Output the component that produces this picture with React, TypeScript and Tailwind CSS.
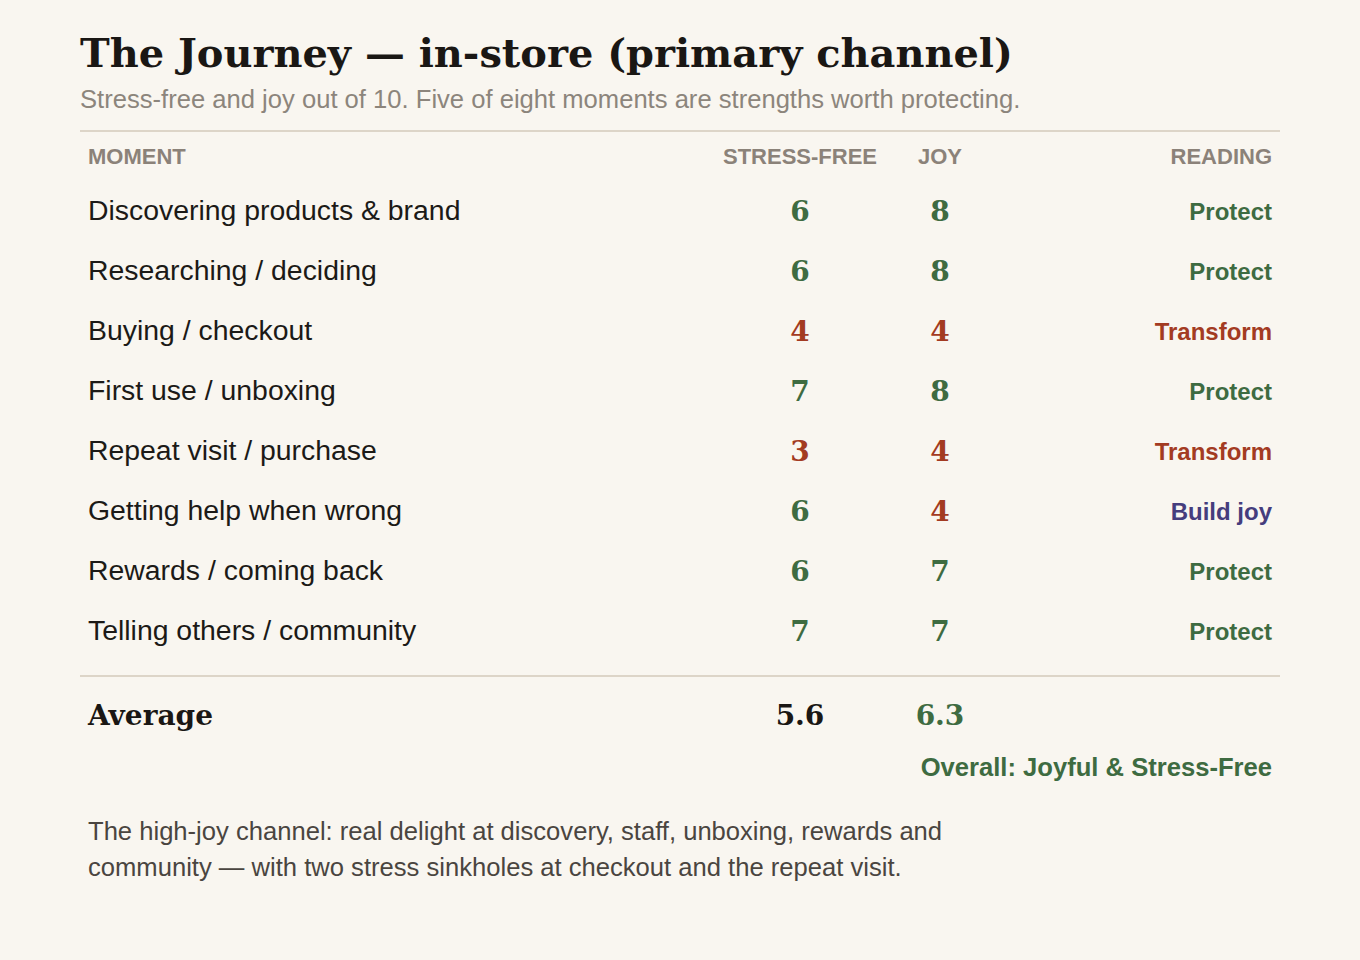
import React from "react";

type Tone = "green" | "red" | "purple";

const toneClass: Record<Tone, string> = {
  green: "text-[#3e6b41]",
  red: "text-[#a33b22]",
  purple: "text-[#453d7d]",
};

const rows: { name: string; sf: number; joy: number; sfTone: Tone; joyTone: Tone; reading: string; rTone: Tone }[] = [
  { name: "Discovering products & brand", sf: 6, joy: 8, sfTone: "green", joyTone: "green", reading: "Protect", rTone: "green" },
  { name: "Researching / deciding", sf: 6, joy: 8, sfTone: "green", joyTone: "green", reading: "Protect", rTone: "green" },
  { name: "Buying / checkout", sf: 4, joy: 4, sfTone: "red", joyTone: "red", reading: "Transform", rTone: "red" },
  { name: "First use / unboxing", sf: 7, joy: 8, sfTone: "green", joyTone: "green", reading: "Protect", rTone: "green" },
  { name: "Repeat visit / purchase", sf: 3, joy: 4, sfTone: "red", joyTone: "red", reading: "Transform", rTone: "red" },
  { name: "Getting help when wrong", sf: 6, joy: 4, sfTone: "green", joyTone: "red", reading: "Build joy", rTone: "purple" },
  { name: "Rewards / coming back", sf: 6, joy: 7, sfTone: "green", joyTone: "green", reading: "Protect", rTone: "green" },
  { name: "Telling others / community", sf: 7, joy: 7, sfTone: "green", joyTone: "green", reading: "Protect", rTone: "green" },
];

const serif = "font-['DejaVu_Serif',serif]";
const sans = "font-['Liberation_Sans',Arial,sans-serif]";

export default function App() {
  return (
    <div className={`min-h-[960px] w-full bg-[#f9f6f0] ${sans}`}>
      <div className="mx-[80px] pt-[29px]">
        <h1 className={`${serif} text-[39.9px] font-bold leading-[48px] text-[#1a1714]`}>
          The Journey — in-store (primary channel)
        </h1>
        <p className="mt-[7px] text-[25.6px] leading-[30px] text-[#8c857c]">
          Stress-free and joy out of 10. Five of eight moments are strengths worth protecting.
        </p>

        <div className="mt-[16px] border-t-2 border-[#ddd5c8]">
          <div className="grid h-[48px] grid-cols-[640px_160px_120px_280px] items-center text-[22px] font-bold uppercase text-[#8b8279]">
            <div className="pl-2">Moment</div>
            <div className="text-center">Stress-free</div>
            <div className="text-center">Joy</div>
            <div className="pr-2 text-right">Reading</div>
          </div>
          {rows.map((r) => (
            <div key={r.name} className="grid h-[60px] grid-cols-[640px_160px_120px_280px] items-center">
              <div className="pl-2 text-[28.4px] text-[#1c1a17]">{r.name}</div>
              <div className={`${serif} pt-[3px] text-center text-[28px] font-bold ${toneClass[r.sfTone]}`}>{r.sf}</div>
              <div className={`${serif} pt-[3px] text-center text-[28px] font-bold ${toneClass[r.joyTone]}`}>{r.joy}</div>
              <div className={`pr-2 pt-[3px] text-right text-[24px] font-bold ${toneClass[r.rTone]}`}>{r.reading}</div>
            </div>
          ))}
        </div>

        <div className="mt-[15px] border-t-2 border-[#ddd5c8]">
          <div className={`grid h-[74px] grid-cols-[640px_160px_120px_280px] items-center pt-[3px] ${serif} text-[28px] font-bold`}>
            <div className="pl-2 text-[#1a1714]">Average</div>
            <div className="text-center text-[#1a1714]">5.6</div>
            <div className="text-center text-[#3e6b41]">6.3</div>
            <div />
          </div>
          <div className="mt-[1px] pr-2 text-right text-[25.6px] font-bold leading-[30px] text-[#3e6b41]">
            Overall: Joyful &amp; Stress-Free
          </div>
        </div>

        <p className="mt-[31px] max-w-[880px] pl-2 text-[25.6px] leading-[36px] text-[#4a4540]">
          The high-joy channel: real delight at discovery, staff, unboxing, rewards and community — with two stress sinkholes at checkout and the repeat visit.
        </p>
      </div>
    </div>
  );
}
